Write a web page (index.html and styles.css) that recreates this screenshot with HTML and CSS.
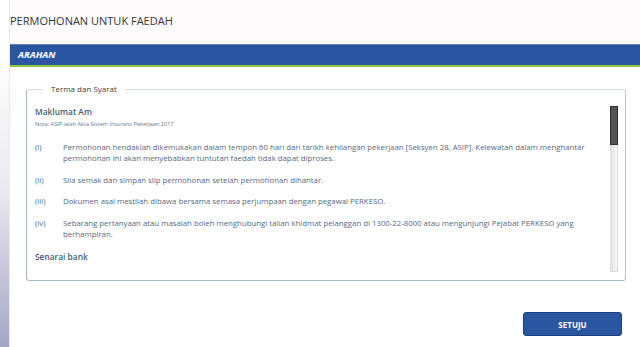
FILE: index.html
```html
<!DOCTYPE html>
<html>
<head>
<meta charset="utf-8">
<title>Permohonan Untuk Faedah</title>
<link rel="stylesheet" href="styles.css">
</head>
<body>
<div class="side"></div>
<div class="main">
	<div class="header">
		<h1 class="title">PERMOHONAN UNTUK FAEDAH</h1>
	</div>
	<div class="bar">ARAHAN</div>

	<fieldset class="terms">
		<legend>Terma dan Syarat</legend>
		<div class="scroll">
			<div class="content">
				<h2 class="heading">Maklumat Am</h2>
				<p class="note">Nota: ASIP ialah Akta Sistem Insurans Pekerjaan 2017</p>

				<div class="item">
					<span class="num">(i)</span>
					<p>Permohonan hendaklah dikemukakan dalam tempoh 60 hari dari tarikh kehilangan pekerjaan [Seksyen 28, ASIP]. Kelewatan dalam menghantar permohonan ini akan menyebabkan tuntutan faedah tidak dapat diproses.</p>
				</div>
				<div class="item">
					<span class="num">(ii)</span>
					<p>Sila semak dan simpan slip permohonan setelah permohonan dihantar.</p>
				</div>
				<div class="item">
					<span class="num">(iii)</span>
					<p>Dokumen asal mestilah dibawa bersama semasa perjumpaan dengan pegawai PERKESO.</p>
				</div>
				<div class="item">
					<span class="num">(iv)</span>
					<p>Sebarang pertanyaan atau masalah boleh menghubungi talian khidmat pelanggan di 1300-22-8000 atau mengunjungi Pejabat PERKESO yang berhampiran.</p>
				</div>

				<h2 class="heading bank-title">Senarai bank</h2>
			</div>
			<div class="scrollbar"><div class="thumb"></div></div>
		</div>
	</fieldset>

	<div class="actions">
		<button class="agree">SETUJU</button>
	</div>
</div>
</body>
</html>
```

FILE: styles.css
```css
html, body {
	margin: 0;
	height: 100%;
}
body {
	display: flex;
	font-family: 'Open Sans', sans-serif;
	background-color: #ffffff;
	overflow: hidden;
}
.side {
	width: 9px;
	flex-shrink: 0;
	background: linear-gradient(#ffffff 15%, #ece8ef 55%, #a4a6c6);
	border-right: 1px solid #ebe8ee;
}
.main {
	flex: 1;
	min-width: 0;
	display: flex;
	flex-direction: column;
}
.header {
	height: 44px;
	background-color: #fcfafa;
}
.title {
	margin: 0;
	padding-top: 13px;
	font-size: 11px;
	line-height: 16px;
	font-weight: 400;
	color: #363636;
}
.bar {
	height: 20px;
	line-height: 20px;
	padding-left: 8px;
	background-color: #2a56a1;
	border-top: 1px solid #5f80bd;
	border-bottom: 2px solid #8dc63f;
	color: #ffffff;
	font-size: 9.5px;
	font-weight: 700;
	font-style: italic;
}
.terms {
	margin: 16px 14px 0 16px;
	padding: 0 7px 8px 8px;
	border: 1px solid #a5bac7;
	border-top-color: #d6dee4;
	border-right-color: #b7c7d1;
	border-radius: 3px;
	min-width: 0;
}
.terms legend {
	margin-left: 8px;
	padding: 0 8px;
	font-size: 8px;
	line-height: 12px;
	color: #3e3e3e;
}
.scroll {
	margin-top: 11px;
	height: 166px;
	display: flex;
	color: #566a80;
	font-size: 7.8px;
}
.content {
	flex: 1;
	min-width: 0;
	overflow: hidden;
}
.scrollbar {
	width: 6px;
	flex-shrink: 0;
	background: linear-gradient(to right, #e2e2e2, #f6f6f6);
	border: 1px solid #dddddd;
}
.thumb {
	height: 37px;
	background-color: #545454;
	border: 1px solid #2f2f2f;
	margin: -1px;
}
.heading {
	margin: 0;
	font-size: 8.4px;
	line-height: 12px;
	font-weight: 600;
	color: #3f5d7b;
}
.note {
	margin: 0 0 12px 0;
	font-size: 5.6px;
	line-height: 12px;
	color: #67788a;
}
.item {
	display: flex;
	margin-bottom: 10.5px;
}
.item .num {
	width: 28px;
	flex-shrink: 0;
	line-height: 11px;
}
.item p {
	margin: 0;
	line-height: 11px;
}
.bank-title {
	margin-top: 11px;
}
.actions {
	display: flex;
	justify-content: flex-end;
	padding: 31px 18px 0 0;
}
.agree {
	width: 99px;
	height: 24px;
	background-color: #2a56a1;
	border: 1px solid #1c3e7c;
	border-radius: 3px;
	color: #ffffff;
	font-family: 'Open Sans', sans-serif;
	font-size: 8px;
	font-weight: 700;
	cursor: pointer;
}
```
